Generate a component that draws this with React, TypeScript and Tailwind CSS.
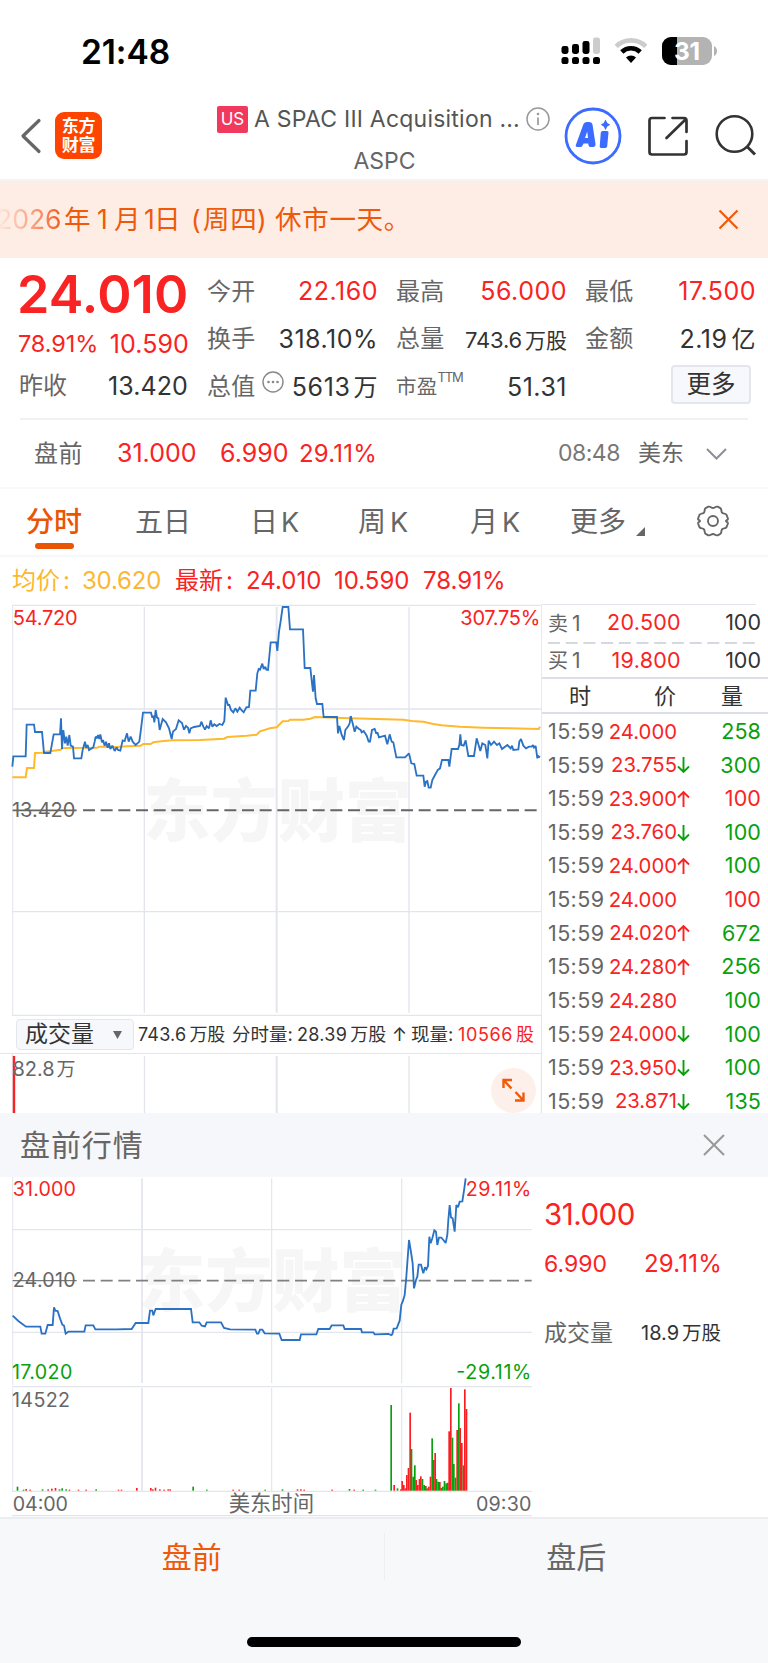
import React from "react";

const RED = "text-[#f92323]";
const DARK = "text-[#333333]";

function StatusBar() {
  return (
    <div className="flex h-[100px] items-start pt-[37px]">
      <div className="ml-[81px] w-[92px] text-[33.5px] leading-[30px] font-semibold tracking-[-0.1px] text-black">21:48</div>
      <svg className="ml-[388px] h-[28px] w-[39px]" viewBox="0 0 39 28">
        <g fill="#000">
          <rect x="0.5" y="9" width="7" height="8" rx="2.4" />
          <rect x="11" y="7" width="7" height="10" rx="2.4" />
          <rect x="21.5" y="4" width="7" height="13" rx="2.4" />
          <rect x="0.5" y="20" width="7" height="7" rx="2.6" />
          <rect x="11" y="20" width="7" height="7" rx="2.6" />
          <rect x="21.5" y="20" width="7" height="7" rx="2.6" />
          <rect x="32" y="20" width="7" height="7" rx="2.6" />
        </g>
        <rect x="32" y="0.5" width="7" height="16.5" rx="2.4" fill="#cccccc" />
      </svg>
      <svg className="ml-[14px] h-[28px] w-[34px]" viewBox="0 0 34 28">
        <path d="M2.2 9.3A21.5 21.5 0 0 1 31.8 9.3" fill="none" stroke="#ccc" strokeWidth="4.6" />
        <path d="M7.8 15A13.2 13.2 0 0 1 26.2 15" fill="none" stroke="#000" strokeWidth="4.6" />
        <path d="M17 26L12 20.6A7 7 0 0 1 22 20.6Z" fill="#000" />
      </svg>
      <div className="relative ml-[14px] flex h-[28px] w-[50px] items-center justify-center overflow-hidden rounded-[9px] bg-[#b3b3b3]">
        <div className="absolute inset-y-0 left-0 w-[15px] bg-black" />
        <span className="relative text-[24.5px] leading-none font-bold tracking-[-0.3px] text-white">31</span>
      </div>
      <svg className="mt-[9px] ml-[2px] h-[10px] w-[3px]" viewBox="0 0 3 10">
        <path d="M0 0Q3 1.5 3 5T0 10Z" fill="#b3b3b3" />
      </svg>
    </div>
  );
}

function Header() {
  return (
    <div className="flex h-[81px] items-start border-b-2 border-[#f3f4f6]">
      <svg className="mt-[18px] ml-[20px] h-[36px] w-[22px]" viewBox="0 0 22 36">
        <path d="M19 2.5L3 18L19 33.5" fill="none" stroke="#666" strokeWidth="3.2" strokeLinecap="round" strokeLinejoin="round" />
      </svg>
      <div className="mt-[12px] ml-[13px] flex h-[47px] w-[47px] flex-col items-center justify-center rounded-[9px] bg-[#ff4400] text-[17px] leading-[19px] font-bold tracking-[-0.3px] text-white">
        <span>东方</span>
        <span>财富</span>
      </div>
      <div className="mt-[5px] ml-[115px] w-[335px]">
        <div className="flex h-[28px] items-center">
          <span className="flex h-[27px] w-[31px] items-center justify-center rounded-[2px] bg-[#f0395c] text-[17px] leading-none text-white">US</span>
          <span className="ml-[6px] w-[267px] text-[23px] leading-none tracking-[0.22px] whitespace-nowrap text-[#555]">A SPAC III Acquisition ...</span>
          <svg className="ml-[5px] h-[24px] w-[24px]" viewBox="0 0 24 24">
            <circle cx="12" cy="12" r="11" fill="none" stroke="#999" strokeWidth="1.5" />
            <path d="M12 10.5V18" stroke="#999" strokeWidth="1.7" />
            <circle cx="12" cy="7" r="1.3" fill="#999" />
          </svg>
        </div>
        <div className="mt-[16px] text-center text-[23px] leading-[24px] text-[#666]">ASPC</div>
      </div>
      <svg className="mt-[7px] ml-[12px] h-[58px] w-[58px]" viewBox="0 0 58 58">
        <circle cx="29" cy="29" r="27" fill="none" stroke="#3b6bff" strokeWidth="2.8" />
        <path d="M19.5 17Q20.5 15 23 15H25.5Q28 15 28.5 17.5L31.5 37Q31.7 40 29 40H26.5Q25 40 24.6 38.5L24.2 36.5H19.6L18.4 38.8Q17.8 40 16.3 40H13.2Q11 40 12 37.6ZM21 31H24L23.2 24.5Z" fill="#3b6bff" />
        <path d="M36.8 25.5Q37 24 38.6 24H43Q44.7 24 44.5 25.6L43.2 39.3Q43 41 41.3 41H37.2Q35.5 41 35.7 39.3Z" fill="#3b6bff" />
        <path d="M41.5 12.5L43.3 16L46.3 17.7L43.3 19.4L41.5 23L39.7 19.4L36.7 17.7L39.7 16Z" fill="#3b6bff" />
      </svg>
      <svg className="mt-[16px] ml-[26px] h-[40px] w-[40px]" viewBox="0 0 40 40">
        <path d="M16.5 2H4Q1.5 2 1.5 4.5V36Q1.5 38.5 4 38.5H36Q38.5 38.5 38.5 36V25M24.5 2H36Q38.5 2 38.5 4.5V16M37.5 3.5L18.5 22" fill="none" stroke="#333" strokeWidth="2.7" strokeLinecap="round" />
      </svg>
      <svg className="mt-[14px] ml-[27px] h-[42px] w-[42px]" viewBox="0 0 42 42">
        <circle cx="19.5" cy="20" r="17.8" fill="none" stroke="#333" strokeWidth="2.6" />
        <path d="M32 32.5L40 40.5" stroke="#333" strokeWidth="3" />
      </svg>
    </div>
  );
}

function Notice() {
  return (
    <div className="flex h-[77px] items-center bg-[#fdede5]">
      <div className="-ml-[4px] flex w-[420px] items-center text-[26.5px] leading-none whitespace-nowrap text-[#ee5a0a]">
        <span className="w-[66px] bg-gradient-to-r from-[#fdede5] to-[#ee5a0a] bg-clip-text tracking-[0px] text-transparent">2026</span>
        <span className="ml-[2px] w-[28px]">年</span>
        <span className="w-[22px] pl-[5px]">1</span>
        <span className="w-[27px]">月</span>
        <span className="w-[13px] pl-[3px]">1</span>
        <span className="w-[37px]">日</span>
        <span className="w-[12px]">(</span>
        <span className="w-[54px] tracking-[0.7px]">周四</span>
        <span className="w-[18px]">)</span>
        <span className="tracking-[0.7px]">休市一天。</span>
      </div>
      <svg className="ml-[302px] h-[21px] w-[21px]" viewBox="0 0 21 21">
        <path d="M1.5 1.5L19.5 19.5M19.5 1.5L1.5 19.5" stroke="#ee5a0a" strokeWidth="2.2" />
      </svg>
    </div>
  );
}

function Cell({ label, children, tone = DARK }: { label: React.ReactNode; children?: React.ReactNode; tone?: string }) {
  return (
    <div className="flex items-center justify-between whitespace-nowrap">
      <span className="-ml-[1px] flex items-center text-[24px] leading-none tracking-[0.3px] text-[#666666]">{label}</span>
      <span className={tone + " -mr-[1px] text-[25px] leading-none tracking-[0.5px]"}>{children}</span>
    </div>
  );
}

function Quote() {
  return (
    <div className="flex h-[160px] gap-[20px] pt-[10px] pr-[13px] pl-[20px]">
      <div className="flex w-[168px] flex-col">
        <div className={RED + " -ml-[3px] flex h-[53px] items-center text-[52px] leading-none font-semibold tracking-[0.2px] whitespace-nowrap"}>24.010</div>
        <div className={RED + " -ml-[2px] flex h-[46px] items-center justify-between leading-none"}>
          <span className="text-[23.5px] tracking-[-0.1px]">78.91%</span>
          <span className="-mr-[1px] text-[25px] tracking-[0.1px]">10.590</span>
        </div>
        <div className="-ml-[1px] flex h-[38px] items-center justify-between leading-none">
          <span className="text-[24px] text-[#666666]">昨收</span>
          <span className="text-[25px] tracking-[0.1px] text-[#333333]">13.420</span>
        </div>
      </div>
      <div className="grid h-[143px] flex-1 grid-cols-3 grid-rows-3 gap-x-[20px]">
        <Cell label="今开" tone={RED}>22.160</Cell>
        <Cell label="最高" tone={RED}>56.000</Cell>
        <Cell label="最低" tone={RED}>17.500</Cell>
        <Cell label="换手">318.10%</Cell>
        <Cell label="总量"><span className="text-[22px] tracking-[-0.2px]">743.6</span><span className="ml-[3px] text-[21px] tracking-normal">万股</span></Cell>
        <Cell label="金额">2.19<span className="ml-[4px] text-[24px]">亿</span></Cell>
        <Cell label={<>总值<svg className="-mt-[10px] ml-[6px] h-[22px] w-[22px]" viewBox="0 0 22 22"><circle cx="11" cy="11" r="10" fill="none" stroke="#888" strokeWidth="1.4" /><circle cx="6.5" cy="11" r="1.3" fill="#888" /><circle cx="11" cy="11" r="1.3" fill="#888" /><circle cx="15.5" cy="11" r="1.3" fill="#888" /></svg></>}>
          <span className="tracking-[0.6px]">5613</span><span className="ml-[3px] text-[24px]">万</span>
        </Cell>
        <Cell label={<><span className="text-[20.5px]">市盈</span><span className="-mt-[20px] text-[13px] leading-none tracking-[-1.2px]">TTM</span></>}>51.31</Cell>
        <div className="flex items-center justify-end">
          <button className="mt-[-6px] mr-[4px] flex h-[39px] w-[80px] items-center justify-center rounded-[4px] border-2 border-[#e3e6ed] bg-[#f7f8fb] text-[24.5px] leading-none text-[#333]">更多</button>
        </div>
      </div>
    </div>
  );
}

function PreSummary() {
  return (
    <div className="flex h-[69px] items-center border-b-2 border-[#f7f8fa] leading-none">
      <span className="ml-[34px] w-[83px] text-[24px] tracking-[0.4px] text-[#666]">盘前</span>
      <span className={RED + " w-[103px] text-[25px]"}>31.000</span>
      <span className={RED + " w-[79px] text-[25px]"}>6.990</span>
      <span className={RED + " w-[259px] text-[24px] tracking-[0.2px]"}>29.11%</span>
      <span className="w-[80px] text-[23px] tracking-[-0.5px] text-[#777]">08:48</span>
      <span className="w-[68px] text-[23px] text-[#666]">美东</span>
      <svg className="h-[12px] w-[21px]" viewBox="0 0 21 12"><path d="M1 1L10.5 10.5L20 1" fill="none" stroke="#8c8f99" strokeWidth="2" /></svg>
    </div>
  );
}

function Tabs() {
  return (
    <div className="flex h-[68px] border-b-2 border-[#f7f8fa] text-[28px] leading-none whitespace-nowrap text-[#666]">
      <div className="ml-[26px] flex w-[109px] flex-col pt-[19px] font-medium text-[#ea5504]">
        分时
        <span className="mt-[7px] ml-[9px] h-[6px] w-[39px] rounded-[3px] bg-[#ea5504]" />
      </div>
      <div className="w-[115px] pt-[19px]">五日</div>
      <div className="w-[108px] pt-[19px]">日<span className="ml-[3px] text-[27px]">K</span></div>
      <div className="w-[112px] pt-[19px]">周<span className="ml-[4px] text-[27px]">K</span></div>
      <div className="w-[100px] pt-[19px]">月<span className="ml-[4px] text-[27px]">K</span></div>
      <div className="w-[55px] pt-[19px]">更多</div>
      <svg className="mt-[38px] ml-[11px] h-[9px] w-[9px]" viewBox="0 0 9 9"><path d="M9 0V9H0Z" fill="#666" /></svg>
      <svg className="mt-[16px] ml-[52px] h-[32px] w-[32px]" viewBox="0 0 32 32">
        <path d="M16 3C18 3 18.6 1 20.7 1.7L23.3 3.1C25 4.2 23.8 6 25 7.6C26.2 9.2 28.7 8 29.6 10L30.9 13.5C31.4 15.2 29 15 29 16C29 17 31.4 16.8 30.9 18.5L29.6 22C28.7 24 26.2 22.8 25 24.4C23.8 26 25 27.8 23.3 28.9L20.7 30.3C18.6 31 18 29 16 29C14 29 13.4 31 11.3 30.3L8.7 28.9C7 27.8 8.2 26 7 24.4C5.8 22.8 3.3 24 2.4 22L1.1 18.5C.6 16.8 3 17 3 16C3 15 .6 15.2 1.1 13.5L2.4 10C3.3 8 5.8 9.2 7 7.6C8.2 6 7 4.2 8.7 3.1L11.3 1.7C13.4 1 14 3 16 3Z" fill="none" stroke="#666" strokeWidth="1.9" strokeLinejoin="round" />
        <circle cx="16" cy="16" r="5" fill="none" stroke="#666" strokeWidth="1.9" />
      </svg>
    </div>
  );
}

function Legend() {
  return (
    <div className="-mt-[2px] flex h-[49px] items-center pt-[2px] pl-[12px] text-[24px] leading-none whitespace-nowrap">
      <span className="w-[70px] text-[#fbb82f]">均价<span className="ml-[3px]">:</span></span>
      <span className="w-[93px] tracking-[-0.2px] text-[#fbb82f]">30.620</span>
      <span className={RED + " w-[71px]"}>最新<span className="ml-[3px]">:</span></span>
      <span className={RED + " w-[88px]"}>24.010</span>
      <span className={RED + " w-[89px]"}>10.590</span>
      <span className={RED}>78.91%</span>
    </div>
  );
}

const PRICE_A =
  "37,515 40,484 77,484 80,389 102,389 105,411 126,411 132,474 151,474 161,418 180,418 183,370 186,462 190,405 195,445 199,425 203,452 208,420 212,452 219,455 222,490 244,490 248,465 255,440 258,458 263,450 267,465 280,457 284,440 287,425 291,430 294,420 298,432 301,418 306,442 309,435 314,452 318,440 323,458 327,445 331,462 337,452 344,468 350,457 354,465 361,467 368,436 374,438 381,415 386,440 392,425 398,440 407,450 418,440 422,410 429,353 453,353 457,368 460,362 463,382 467,345 471,368 475,370 479,405 488,372 498,382 507,400 515,432 519,410 528,402 536,376 546,384 552,404 558,393 564,398 568,415 572,400 582,396 600,393 604,380 610,395 615,404 620,393 627,400 632,376 637,395 643,388 650,393 658,387 667,390 673,378 677,308 684,330 688,330 693,345 700,352 706,340 712,350 719,338 724,345 731,352 739,337 747,336 751,287 767,287 772,235 776,222 780,224 787,206 791,222 796,215 799,224 804,225 812,142 829,142 832,168 837,110 841,85 848,36 865,36 870,103 909,103 914,219 931,219 936,265 939,290 942,240 947,310 951,327 967,327 971,366 1011,366 1014,415 1018,393 1025,420 1032,435 1036,405 1045,393 1049,385 1052,363";
const PRICE_B =
  "242,363 248,385 254,410 259,395 267,402 272,405 275,412 281,408 290,422 296,440 300,440 306,405 314,402 319,416 322,412 327,427 345,422 352,448 359,418 365,440 370,442 379,487 405,487 417,475 424,505 433,507 440,542 460,542 464,575 468,560 472,558 476,578 482,578 487,555 495,540 503,525 510,520 516,495 535,495 538,515 545,462 564,462 568,450 571,418 574,450 581,452 587,436 595,483 612,483 620,430 631,468 637,445 646,450 652,490 656,437 663,450 672,440 681,450 688,445 696,462 712,450 722,460 726,452 730,465 745,463 748,440 753,432 760,452 768,460 777,455 785,455 789,450 792,458 797,453 802,490 804,483 810,487";
const AVG_A =
  "37,547 77,547 81,519 102,519 105,474 126,473 135,470 155,468 182,464 190,459 290,458 300,455 350,456 380,454 422,452 430,447 452,447 460,442 490,438 520,436 600,435 672,431 682,426 740,422 770,419 780,409 810,400 830,397 848,379 865,378 870,374 910,374 931,371 945,366 1010,368 1051,370";
const AVG_B =
  "241,370 400,374 425,378 460,380 490,387 515,391 570,395 640,398 720,400 806,402 810,395";

function Watermark({ x, y }: { x: number; y: number }) {
  return (
    <text x={x} y={y} fontSize="204" fontWeight="900" fill="#f6f6f6" textLength="806" lengthAdjust="spacingAndGlyphs">东方财富</text>
  );
}

function MainChart() {
  return (
    <svg className="block h-[412px] w-[542px]" viewBox="0 27 1626 1236">
      <Watermark x={430} y={722} />
      <g stroke="#e2e5ec" fill="none">
        <path d="M36 31H1626" strokeWidth="4" />
        <path d="M38 31V1262M1625 31V1263" strokeWidth="3" />
        <path d="M433 36V1253M1227 36V1253" strokeWidth="4" />
        <path d="M830 36V1253" strokeWidth="6" />
        <path d="M38 342H1624M38 950H1624" strokeWidth="4" />
        <path d="M36 1261H1626" strokeWidth="4" />
      </g>
      <path d="M38 646H230" stroke="#666" strokeWidth="5" />
      <path d="M249 646H1618" stroke="#666" strokeWidth="6" strokeDasharray="36 17" />
      <g fill="none" strokeLinejoin="miter" strokeMiterlimit="2">
        <g stroke="#ffb92e" strokeWidth="6">
          <polyline points={AVG_A} />
          <polyline points={AVG_B} transform="translate(810 0)" />
        </g>
        <g stroke="#2b72c4" strokeWidth="5.5">
          <polyline points={PRICE_A} />
          <polyline points={PRICE_B} transform="translate(810 0)" />
        </g>
      </g>
      <g fontSize="60">
        <text x="38" y="89" fill="#f92323" textLength="195">54.720</text>
        <text x="1621" y="89" fill="#f92323" textAnchor="end" textLength="240">307.75%</text>
        <text x="36" y="665" fill="#666" textLength="190">13.420</text>
      </g>
    </svg>
  );
}

function VolumeBar() {
  return (
    <div className="flex h-[38px] w-[542px] items-center border-r border-b-[1.5px] border-[#e2e5ec] pl-[16px] text-[18px] leading-none whitespace-nowrap text-[#333]">
      <div className="flex h-[31px] w-[118px] items-center rounded-[4px] border-[1.5px] border-[#e3e6ed] bg-[#f7f8fb] pl-[8px] text-[23px]">
        成交量
        <svg className="ml-[19px] h-[8px] w-[9px]" viewBox="0 0 9 8"><path d="M0 0H9L4.5 8Z" fill="#666" /></svg>
      </div>
      <span className="ml-[4px] w-[94px] text-[18px] tracking-[0.2px]">743.6<span className="ml-[3px] text-[18px] tracking-normal">万股</span></span>
      <span className="w-[65px] text-[18.5px]">分时量:</span>
      <span className="w-[95px] tracking-[0.3px]">28.39<span className="ml-[3px] text-[18px] tracking-normal">万股</span></span>
      <span className="w-[19px] font-['Inter']">↑</span>
      <span className="w-[47px] text-[18.5px]">现量:</span>
      <span className={RED + " tracking-[0.6px]"}>10566<span className="ml-[3px] text-[18px]">股</span></span>
    </div>
  );
}

function VolumeChart() {
  return (
    <div className="relative h-[59px] w-[542px] overflow-hidden">
      <svg className="block h-[59px] w-[542px]" viewBox="0 1 542 59">
        <path d="M12.5 0V60M541.5 0V60M144.5 3V60M409 3V60" stroke="#e2e5ec" strokeWidth="1.3" />
        <path d="M276.7 3V60" stroke="#e2e5ec" strokeWidth="2" />
        <path d="M14 3V60" stroke="#f92323" strokeWidth="2.4" />
        <text x="12.5" y="23" fontSize="20" fill="#666" textLength="42">82.8</text>
        <text x="56.5" y="23" fontSize="19" fill="#666">万</text>
      </svg>
      <div className="absolute top-[14px] left-[491px] flex h-[45px] w-[45px] items-center justify-center rounded-full bg-[#fdf0ea]">
        <svg className="h-[25px] w-[23px]" viewBox="0 0 23 25">
          <path d="M1.5 10V2H10M2 2.5L9.5 10.5M21.5 14.5V22.5H13M21 22L13.5 14" fill="none" stroke="#ee5a0a" strokeWidth="2.4" />
        </svg>
      </div>
    </div>
  );
}

const TRADES: [string, string, string, boolean][] = [
  ["24.000", "", "258", true],
  ["23.755", "down", "300", true],
  ["23.900", "up", "100", false],
  ["23.760", "down", "100", true],
  ["24.000", "up", "100", true],
  ["24.000", "", "100", false],
  ["24.020", "up", "672", true],
  ["24.280", "up", "256", true],
  ["24.280", "", "100", true],
  ["24.000", "down", "100", true],
  ["23.950", "down", "100", true],
  ["23.871", "down", "135", true],
];

function Arrow({ dir }: { dir: string }) {
  return (
    <svg className="h-[18px] w-[13px]" viewBox="0 0 13 18">
      {dir === "up" && <path d="M6.5 17V2M1 7.5L6.5 2L12 7.5" fill="none" stroke="#f92323" strokeWidth="1.9" />}
      {dir === "down" && <path d="M6.5 1V16M1 10.5L6.5 16L12 10.5" fill="none" stroke="#09a00d" strokeWidth="1.9" />}
    </svg>
  );
}

function OrderBook() {
  return (
    <div className="w-[226px] text-[21.5px] leading-none">
      <div className="mr-[12px] h-[2px] border-t-[1.5px] border-[#e2e5ec]" />
      <div className="flex h-[36px] items-center pr-[7px] pb-[2px] pl-[6px]">
        <span className="w-[36px] text-[20px] whitespace-nowrap text-[#666]">卖<span className="ml-[4px] text-[21px]">1</span></span>
        <span className={RED + " w-[97px] text-right tracking-[0.3px]"}>20.500</span>
        <span className="flex-1 text-right text-[#333]">100</span>
      </div>
      <svg className="ml-[6px] block h-[2px] w-[208px]" viewBox="0 0 208 2"><path d="M0 1H208" stroke="#d5d8df" strokeWidth="2" strokeDasharray="12 5.7" /></svg>
      <div className="flex h-[33px] items-center pr-[7px] pl-[6px]">
        <span className="w-[36px] text-[20px] whitespace-nowrap text-[#666]">买<span className="ml-[4px] text-[21px]">1</span></span>
        <span className={RED + " w-[97px] text-right tracking-[0.3px]"}>19.800</span>
        <span className="flex-1 text-right text-[#333]">100</span>
      </div>
      <div className="flex h-[37px] items-center border-y-2 border-[#dcdfe6] pt-[1px] pl-[27px] text-[22px] text-[#333]">
        <span className="w-[85px]">时</span>
        <span className="w-[67px]">价</span>
        <span>量</span>
      </div>
      <div className="mt-[1px] flex flex-col">
        {TRADES.map(([price, dir, vol, green], i) => (
          <div key={i} className="flex h-[33.62px] items-center pr-[7px] pl-[6px]">
            <span className="w-[59px] tracking-[0.4px] text-[#666]">15:59</span>
            <span className={RED + " w-[70px] text-right text-[20.3px]"}>{price}</span>
            <Arrow dir={dir} />
            <span className={(green ? "text-[#09a00d]" : RED) + " flex-1 text-right text-[21.5px] tracking-[0.1px]"}>{vol}</span>
          </div>
        ))}
      </div>
    </div>
  );
}

const PRE_A =
  "38,467 55,483 67,492 78,500 121,500 125,521 136,521 143,495 158,495 162,442 166,452 173,453 180,475 187,494 192,497 197,521 205,515 253,515 257,496 280,496 286,508 350,508 395,507 407,489 445,489 450,452 457,452 460,466 467,447 573,447 578,487 598,487 605,497 615,499 620,487 663,487 672,504 690,508 766,509 771,521 775,521 780,509 787,509 794,520 838,521 845,540 899,540 903,523 949,523 955,507 989,507 995,496 1030,496 1034,507 1083,507 1086,517 1120,517 1124,523 1165,522 1176,526";
const PRE_B =
  "66,526 71,506 80,505 89,482 94,434 99,422 104,405 109,350 117,240 122,270 128,310 132,385 138,360 142,350 146,314 153,314 160,340 165,322 169,328 174,318 178,230 182,250 187,235 193,211 198,215 202,255 207,233 214,233 220,240 227,249 232,225 235,180 239,135 243,172 248,175 254,215 259,135 264,142 269,125 277,124 283,85 287,55";

const BARS: [number, number, string][] = [
  [61, 735, "g"], [70, 975, "r"], [80, 985, "g"], [90, 988, "r"], [94, 963, "r"], [99, 975, "r"], [104, 985, "r"], [108, 945, "r"], [113, 924, "r"], [118, 758, "r"], [122, 867, "g"], [127, 950, "g"], [132, 916, "g"], [136, 960, "r"], [141, 975, "r"], [146, 957, "r"], [150, 949, "r"], [155, 957, "g"], [160, 975, "g"], [165, 978, "r"], [169, 985, "g"], [174, 980, "r"], [179, 950, "r"], [184, 835, "g"], [189, 900, "r"], [193, 879, "r"], [197, 957, "g"], [202, 965, "g"], [207, 966, "r"], [211, 984, "r"], [216, 980, "g"], [221, 963, "g"], [226, 970, "g"], [231, 968, "r"], [235, 814, "r"], [240, 684, "r"], [245, 833, "g"], [249, 912, "g"], [254, 953, "g"], [259, 810, "r"], [264, 730, "g"], [268, 804, "r"], [273, 849, "r"], [278, 916, "g"], [282, 688, "r"], [287, 747, "r"],
];
const TICKS: [number, number, string][] = [
  [50, 980, "g"], [68, 989, "g"], [76, 987, "r"], [88, 989, "r"], [125, 988, "g"], [142, 988, "r"], [153, 986, "r"], [164, 984, "r"], [176, 988, "g"], [184, 985, "g"], [196, 988, "g"], [206, 989, "r"], [233, 989, "r"], [256, 989, "r"], [286, 988, "g"], [353, 989, "r"], [362, 989, "r"], [408, 984, "r"], [450, 984, "r"], [456, 988, "r"], [464, 983, "r"], [477, 988, "r"], [490, 989, "r"], [502, 988, "r"], [508, 988, "r"], [577, 980, "g"], [618, 989, "g"], [697, 989, "r"], [715, 989, "r"], [793, 989, "g"], [845, 988, "g"], [890, 988, "r"], [900, 988, "r"], [910, 989, "r"], [994, 989, "r"], [1046, 987, "g"], [1060, 989, "r"], [1087, 989, "g"], [1124, 989, "g"],
];

function PreChart() {
  const color = (c: string) => (c === "g" ? "#09a00d" : "#fa1e22");
  return (
    <svg className="block h-[340px] w-[532px]" viewBox="0 51 1596 1020">
      <Watermark x={414} y={438} />
      <g stroke="#e2e5ec" fill="none">
        <path d="M38 51V675M38 685V993" strokeWidth="3" />
        <path d="M426 55V669M426 684V992" strokeWidth="5" />
        <path d="M815 55V669M815 684V992M1205 55V669M1205 684V992" strokeWidth="3.5" />
        <path d="M38 209H1595M38 517H1595M36 680H1595M36 994H1595" strokeWidth="3.5" />
        <path d="M36 1067H1595" strokeWidth="4" />
      </g>
      <path d="M38 362H230" stroke="#777" strokeWidth="4" />
      <path d="M249 362H1595" stroke="#808080" strokeWidth="5.5" strokeDasharray="36 17" />
      {TICKS.map(([x, y, c]) => <rect key={x} x={x} y={y} width="5" height={992 - y} fill={color(c)} />)}
      <g transform="translate(1110 0)">
        {BARS.map(([x, y, c]) => <rect key={x} x={x} y={y} width="5" height={992 - y} fill={color(c)} />)}
      </g>
      <g fill="none" stroke="#2b72c4" strokeWidth="5.5" strokeMiterlimit="2">
        <polyline points={PRE_A} />
        <polyline points={PRE_B} transform="translate(1110 0)" />
      </g>
      <g fontSize="59">
        <text x="38" y="108" fill="#f92323" textLength="190">31.000</text>
        <text x="1594" y="108" fill="#f92323" textAnchor="end" textLength="197">29.11%</text>
        <text x="38" y="382" fill="#666" textLength="189">24.010</text>
        <text x="36" y="656" fill="#09a00d" textLength="181">17.020</text>
        <text x="1594" y="656" fill="#09a00d" textAnchor="end" textLength="225">-29.11%</text>
        <text x="36" y="742" fill="#666" textLength="174">14522</text>
        <text x="38" y="1053" fill="#666" textLength="166">04:00</text>
        <text x="1594" y="1053" fill="#666" textAnchor="end" textLength="166">09:30</text>
        <text x="686" y="1053" fill="#666" fontSize="64" textLength="256">美东时间</text>
      </g>
    </svg>
  );
}

function PreMarket() {
  return (
    <>
      <div className="flex h-[64px] items-center justify-between bg-[#f6f7fa] pr-[43px] pb-[1px] pl-[20px]">
        <span className="text-[30px] leading-none tracking-[0.9px] text-[#666]">盘前行情</span>
        <svg className="h-[22px] w-[22px]" viewBox="0 0 22 22"><path d="M1 1L21 21M21 1L1 21" stroke="#999" strokeWidth="2" /></svg>
      </div>
      <div className="flex h-[340px] bg-white">
        <PreChart />
        <div className="flex flex-col pl-[12px] leading-none">
          <div className={RED + " mt-[23px] flex h-[30px] items-center text-[29.5px] tracking-[-0.5px]"}>31.000</div>
          <div className={RED + " mt-[21px] flex h-[26px] items-center text-[23px]"}>
            <span className="w-[100px]">6.990</span>
            <span className="text-[24px] tracking-[0.2px]">29.11%</span>
          </div>
          <div className="mt-[43px] flex h-[26px] items-center">
            <span className="w-[97px] text-[23px] text-[#666]">成交量</span>
            <span className="text-[20px] text-[#333]">18.9<span className="ml-[3px] text-[19.5px]">万股</span></span>
          </div>
        </div>
      </div>
    </>
  );
}

function Footer() {
  return (
    <div className="flex h-[147px] flex-col items-center border-t-2 border-[#ebedf0] bg-[#f6f8fa]">
      <div className="flex h-[75px] w-full items-center text-center text-[30px] leading-none">
        <span className="flex-1 text-[#ee5a0a]">盘前</span>
        <span className="h-[47px] w-px bg-[#eceef2]" />
        <span className="flex-1 text-[#666]">盘后</span>
      </div>
      <div className="mt-[43px] h-[10px] w-[274px] rounded-full bg-black" />
    </div>
  );
}

export default function App() {
  return (
    <div className="h-[1663px] w-[768px] overflow-hidden bg-white font-['Inter','Noto_Sans_CJK_SC',sans-serif]">
      <StatusBar />
      <Header />
      <Notice />
      <Quote />
      <div className="mr-[20px] ml-[20px] h-[2px] bg-[#f0f1f4]" />
      <PreSummary />
      <Tabs />
      <Legend />
      <div className="flex h-[509px]">
        <div className="w-[542px]">
          <MainChart />
          <VolumeBar />
          <VolumeChart />
        </div>
        <OrderBook />
      </div>
      <PreMarket />
      <Footer />
    </div>
  );
}
